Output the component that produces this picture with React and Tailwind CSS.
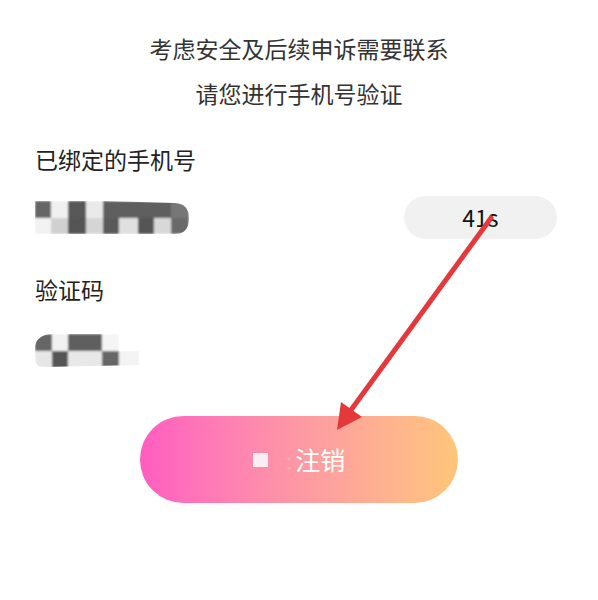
import React from 'react'

const font = { fontFamily: '"Noto Sans CJK SC", "Noto Sans", sans-serif' }

// blurred mosaic that hides the bound phone number
const PhoneMosaic = () => (
  <svg width="154" height="36" viewBox="0 0 154 36" className="block">
    <defs>
      <clipPath id="phoneClip">
        <path d="M0 1 L68 1 L140 3 Q154 4 154 18 Q154 34 140 34 L0 34 Z" />
      </clipPath>
      <filter id="soft1"><feGaussianBlur stdDeviation="0.9" /></filter>
    </defs>
    <g clipPath="url(#phoneClip)" filter="url(#soft1)">
      <rect x="0" y="1" width="16" height="17" fill="#666" />
      <rect x="16" y="1" width="17" height="17" fill="#f0f0f0" />
      <rect x="33" y="1" width="18" height="17" fill="#585858" />
      <rect x="51" y="1" width="17" height="17" fill="#eaeaea" />
      <rect x="68" y="1" width="68" height="17" fill="#5e5e5e" />
      <rect x="136" y="1" width="18" height="17" fill="#777" />
      <rect x="0" y="18" width="16" height="16" fill="#f2f2f2" />
      <rect x="16" y="18" width="17" height="16" fill="#d0d0d0" />
      <rect x="33" y="18" width="18" height="16" fill="#555" />
      <rect x="51" y="18" width="17" height="16" fill="#d5d5d5" />
      <rect x="68" y="18" width="16" height="16" fill="#5a5a5a" />
      <rect x="84" y="18" width="19" height="16" fill="#e0e0e0" />
      <rect x="103" y="18" width="16" height="16" fill="#555" />
      <rect x="119" y="18" width="17" height="16" fill="#d8d8d8" />
      <rect x="136" y="18" width="18" height="16" fill="#6a6a6a" />
    </g>
  </svg>
)

// blurred mosaic that hides the verification code
const CodeMosaic = () => (
  <svg width="106" height="35" viewBox="0 0 106 35" className="block">
    <defs>
      <clipPath id="codeClip">
        <path d="M6 3 Q10 0 18 0 L84 0 L84 17 L104 17 L104 31 L10 33 Q0 34 0 23 L0 12 Q1 6 6 3 Z" />
      </clipPath>
      <filter id="soft2"><feGaussianBlur stdDeviation="0.9" /></filter>
    </defs>
    <g clipPath="url(#codeClip)" filter="url(#soft2)">
      <rect x="0" y="0" width="17" height="17" fill="#666" />
      <rect x="17" y="0" width="16" height="17" fill="#f2f2f2" />
      <rect x="33" y="0" width="34" height="17" fill="#5e5e5e" />
      <rect x="67" y="0" width="17" height="17" fill="#f5f5f5" />
      <rect x="0" y="17" width="17" height="17" fill="#e6e6e6" />
      <rect x="17" y="17" width="16" height="17" fill="#555" />
      <rect x="33" y="17" width="34" height="17" fill="#e8e8e8" />
      <rect x="67" y="17" width="17" height="17" fill="#666" />
      <rect x="84" y="17" width="20" height="17" fill="#f3f3f3" />
    </g>
  </svg>
)

export default function App() {
  return (
    <div className="relative w-[598px] h-[600px] bg-white overflow-hidden" style={font}>
      <div className="pt-[26px] text-center text-[23px] leading-[45px] text-[#333]">
        <p>考虑安全及后续申诉需要联系</p>
        <p>请您进行手机号验证</p>
      </div>

      <div className="pl-[35px] pr-[41px]">
        <p className="mt-[27px] text-[23px] leading-[32px] text-[#222]">已绑定的手机号</p>

        <div className="mt-[21px] flex items-center justify-between">
          <PhoneMosaic />
          <div className="w-[153px] h-[43px] rounded-full bg-[#f1f1f1] flex items-center justify-center text-[23px] text-[#111]">
            41s
          </div>
        </div>

        <p className="mt-[34px] text-[23px] leading-[32px] text-[#222]">验证码</p>

        <div className="mt-[29px]">
          <CodeMosaic />
        </div>
      </div>

      <button className="mt-[47px] mx-auto flex w-[318px] h-[87px] items-center justify-center rounded-full bg-linear-to-r from-[#ff5cc1] via-[#fd98a4] to-[#fec679] text-white">
        <span className="w-[15px] h-[14px] bg-[#fcecf4]" />
        <span className="ml-[18px] text-[24px] text-white/20">:</span>
        <span className="ml-[3px] text-[25px] leading-none">注销</span>
      </button>

      {/* red annotation arrow */}
      <svg className="absolute inset-0 pointer-events-none" width="598" height="600" viewBox="0 0 598 600">
        <line x1="491" y1="218" x2="351" y2="410" stroke="#e5383b" strokeWidth="5" strokeLinecap="round" />
        <polygon points="337,430 341,402 362,417" fill="#e5383b" />
      </svg>
    </div>
  )
}
